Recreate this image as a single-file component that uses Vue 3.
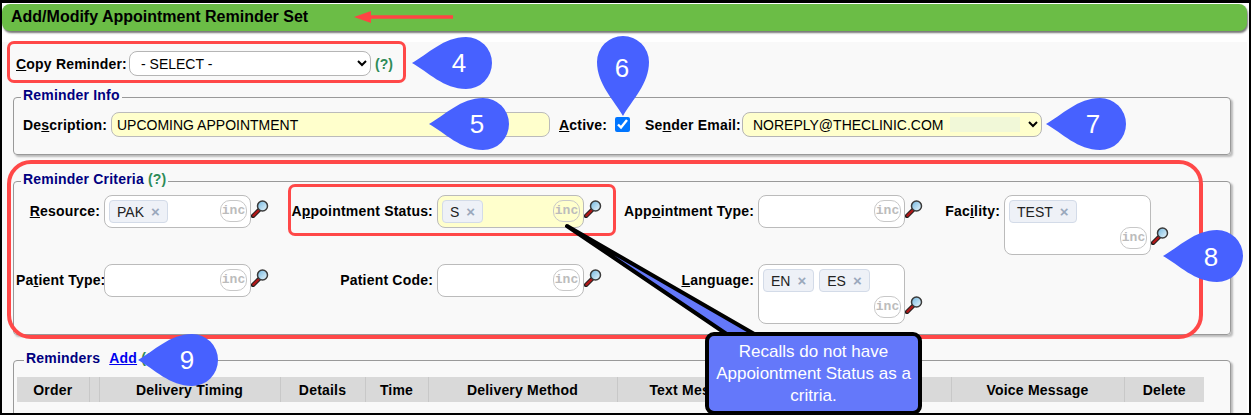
<script setup>
const fields = [
  { pre: '', u: 'R', post: 'esource:', chips: ['PAK'] },
  { pre: 'A', u: 'p', post: 'pointment Status:', chips: ['S'], yellow: true },
  { pre: 'App', u: 'o', post: 'intment Type:', chips: [] },
  { pre: 'Fac', u: 'i', post: 'lity:', chips: ['TEST'], tall: true },
  { pre: 'Pa', u: 't', post: 'ient Type:', chips: [] },
  { pre: 'Patient Code:', u: '', post: '', chips: [] },
  { pre: '', u: 'L', post: 'anguage:', chips: ['EN', 'ES'], tall: true },
]
const columns = [
  { name: 'Order', w: 72 }, { name: '', w: 10 }, { name: 'Delivery Timing', w: 181 },
  { name: 'Details', w: 85 }, { name: 'Time', w: 63 }, { name: 'Delivery Method', w: 189 },
  { name: 'Text Message', w: 158 }, { name: 'Email Message', w: 176 },
  { name: 'Voice Message', w: 173 }, { name: 'Delete', w: 80 },
]
const dropShape = 'M-54 0C-38 -9 -22 -26 0 -26A26 26 0 1 1 0 26C-22 26 -38 9 -54 0Z'
const pins = [
  { n: '4', x: 466, y: 63, tx: 459, ty: 72 },
  { n: '5', x: 483, y: 124, tx: 477, ty: 133 },
  { n: '6', x: 623, y: 62, tx: 622, ty: 77, down: true },
  { n: '7', x: 1100, y: 124, tx: 1093, ty: 133 },
  { n: '8', x: 1217, y: 256, tx: 1211, ty: 266 },
  { n: '9', x: 192, y: 360, tx: 187, ty: 369 },
]
</script>

<template>
  <div class="page">
    <div class="inner">
      <h1 class="title">Add/Modify Appointment Reminder Set</h1>
      <div class="content">
        <div class="copy-row">
          <label class="lbl"><u>C</u>opy Reminder:</label>
          <select class="sel copy-sel"><option>- SELECT -</option></select>
          <span class="help">(?)</span>
        </div>

        <fieldset class="group info">
          <legend>Reminder Info</legend>
          <div class="info-row">
            <label class="lbl">De<u>s</u>cription:</label>
            <input class="text-input" type="text" value="UPCOMING APPOINTMENT" />
            <label class="lbl active-lbl"><u>A</u>ctive:</label>
            <input class="check" type="checkbox" checked />
            <label class="lbl sender-lbl">Se<u>n</u>der Email:</label>
            <div class="sender-wrap">
              <select class="sel sender-sel"><option>NOREPLY@THECLINIC.COM</option></select>
              <span class="autofill"></span>
            </div>
          </div>
        </fieldset>

        <fieldset class="group criteria">
          <legend>Reminder Criteria <span class="help">(?)</span></legend>
          <div class="crit-grid">
            <template v-for="f in fields" :key="f.pre + f.post">
              <label class="lbl crit-lbl">{{ f.pre }}<u v-if="f.u">{{ f.u }}</u>{{ f.post }}</label>
              <div class="crit-field">
                <div class="box" :class="{ tall: f.tall, yellow: f.yellow }">
                  <div class="chips">
                    <span v-for="c in f.chips" :key="c" class="chip">{{ c }}<b class="x">×</b></span>
                  </div>
                  <span class="inc">inc</span>
                </div>
                <svg class="mag" width="18" height="18" viewBox="0 0 18 18">
                  <defs>
                    <linearGradient id="glass" x1="0" y1="0" x2="1" y2="1">
                      <stop offset="0" stop-color="#6fb6e0" />
                      <stop offset="1" stop-color="#eef8fc" />
                    </linearGradient>
                  </defs>
                  <path d="M8 10L2 16" stroke="#222" stroke-width="4.4" stroke-linecap="round" />
                  <path d="M8 10L2.4 15.6" stroke="#b01818" stroke-width="2.4" stroke-linecap="round" />
                  <circle cx="11.5" cy="6" r="5" fill="url(#glass)" stroke="#3a3a3a" stroke-width="1.5" />
                </svg>
              </div>
            </template>
          </div>
        </fieldset>

        <fieldset class="group reminders">
          <legend>Reminders <a class="add" href="#">Add</a> <span class="help">(?)</span></legend>
          <table class="rem-table">
            <colgroup>
              <col v-for="c in columns" :key="c.w + c.name" :style="{ width: c.w + 'px' }" />
            </colgroup>
            <thead>
              <tr>
                <th v-for="c in columns" :key="c.name + c.w">{{ c.name }}</th>
              </tr>
            </thead>
          </table>
        </fieldset>
      </div>
    </div>

    <div class="mark mark-copy"></div>
    <div class="mark mark-crit"></div>
    <div class="mark mark-status"></div>

    <svg class="overlay" width="1251" height="415" viewBox="0 0 1251 415">
      <path d="M354 17L371 11V15.3H453V18.7H371V23Z" fill="#ff4444" />
      <path d="M567 226L756 335H728Z" fill="#6478fa" stroke="#000" stroke-width="4" stroke-linejoin="round" />
      <g v-for="p in pins" :key="p.n">
        <path :d="dropShape" fill="#4761ff" :transform="`translate(${p.x} ${p.y})` + (p.down ? ' rotate(-90)' : '')" />
        <text class="pin-num" :x="p.tx" :y="p.ty" text-anchor="middle">{{ p.n }}</text>
      </g>
    </svg>

    <div class="callout">Recalls do not have Appoiontment Status as a critria.</div>
  </div>
</template>

<style scoped>
.page {
  position: relative;
  box-sizing: border-box;
  width: 1251px;
  height: 415px;
  padding: 3px 2px 2px;
  background: #000;
  overflow: hidden;
  font-family: "Liberation Sans", Arial, sans-serif;
  color: #000;
}
.inner {
  height: 100%;
  background: #fff;
  padding-top: 1px;
  box-sizing: border-box;
  overflow: hidden;
}
.title {
  box-sizing: border-box;
  height: 27px;
  width: 1245px;
  margin: 0;
  padding-left: 9px;
  font-size: 16px;
  line-height: 26px;
  font-weight: bold;
  background: #6bbd46;
  border-radius: 8px;
  box-shadow: 1px 2px 2px #777;
}
.content {
  margin-top: 11px;
  width: 1245px;
  height: 400px;
  padding: 9px 0 0 11px;
  box-sizing: border-box;
  background: #f9f9f9;
}
.lbl {
  font-size: 14px;
  font-weight: bold;
  letter-spacing: 0.2px;
  line-height: 16px;
  white-space: nowrap;
}
.help {
  font-size: 14px;
  font-weight: bold;
  color: #2e8b57;
}
.copy-row {
  display: flex;
  align-items: center;
  height: 25px;
  padding-left: 3px;
}
.copy-row .lbl {
  width: 113px;
}
.sel {
  box-sizing: border-box;
  height: 25px;
  border: 1px solid #b5b5b5;
  border-radius: 8px;
  font: 14px "Liberation Sans", Arial, sans-serif;
  color: #000;
}
.copy-sel {
  width: 242px;
  padding-left: 7px;
  background: #fff;
  margin-right: 4px;
}
.group {
  box-sizing: border-box;
  width: 1218px;
  margin: 0;
  padding: 0;
  border: 1px solid #999;
  border-radius: 4px;
  box-shadow: 2px 2px 2px #bbb;
}
.group legend {
  margin-left: 7px;
  padding: 0 2px 5px;
  font-size: 14px;
  line-height: 16px;
  font-weight: bold;
  color: #000080;
  letter-spacing: 0.2px;
}
.info {
  margin-top: 11px;
}
.info-row {
  display: flex;
  align-items: center;
  padding: 4px 0 17px 9px;
}
.info-row .lbl:first-child {
  width: 88px;
}
.text-input {
  box-sizing: border-box;
  width: 439px;
  height: 25px;
  padding: 0 5px;
  border: 1px solid #bbb;
  border-radius: 8px;
  background: #ffffcc;
  font: 14px "Liberation Sans", Arial, sans-serif;
  color: #000;
  outline: none;
}
.active-lbl {
  width: 56px;
  margin-left: 9px;
}
.check {
  width: 15px;
  height: 15px;
  margin: 0 15px 0 0;
}
.sender-lbl {
  width: 97px;
}
.sender-wrap {
  position: relative;
  width: 300px;
  height: 25px;
}
.sender-sel {
  width: 300px;
  padding-left: 6px;
  background: #ffffcc;
}
.autofill {
  position: absolute;
  left: 208px;
  top: 5px;
  width: 70px;
  height: 15px;
  background: #f1f8d8;
  pointer-events: none;
}
.criteria {
  margin-top: 16px;
}
.crit-grid {
  display: grid;
  grid-template-columns: 88px 169px 164px 169px 152px 168px 78px 169px;
  grid-template-rows: 60px 60px;
  row-gap: 9px;
  padding: 3px 0 10px 2px;
}
.crit-lbl {
  text-align: right;
  padding: 8px 4px 0 0;
}
.crit-field {
  display: flex;
  align-items: flex-start;
}
.box {
  box-sizing: border-box;
  display: flex;
  justify-content: space-between;
  width: 147px;
  height: 33px;
  padding: 4px 3px 0 4px;
  border: 1px solid #bbb;
  border-radius: 8px;
  background: #fff;
}
.box.tall {
  height: 60px;
}
.box.yellow {
  background: #ffffcc;
}
.chips {
  display: flex;
  gap: 5px;
  align-items: flex-start;
}
.chip {
  box-sizing: border-box;
  display: flex;
  align-items: center;
  height: 23px;
  padding: 0 7px;
  gap: 7px;
  border: 1px solid #d3dbe8;
  border-radius: 4px;
  background: #eef1f7;
  font-size: 14px;
  color: #222;
}
.x {
  font-size: 15px;
  line-height: 15px;
  color: #9aa8bc;
}
.inc {
  box-sizing: border-box;
  align-self: flex-end;
  width: 27px;
  height: 22px;
  margin-bottom: 5px;
  border: 1px solid #c8c8c8;
  border-radius: 10px;
  font: bold 13px/20px "Liberation Mono", monospace;
  text-align: center;
  color: #bcbcbc;
}
.mag {
  flex: none;
  align-self: flex-start;
  margin-top: 5px;
}
.box.tall + .mag {
  margin-top: 32px;
}
.reminders {
  margin-top: 15px;
  height: 90px;
  padding: 6px 0 0 3px;
}
.add {
  margin-left: 5px;
  color: #0000ee;
  text-decoration: underline;
}
.rem-table {
  table-layout: fixed;
  width: 1187px;
  border-collapse: collapse;
}
.rem-table th {
  height: 25px;
  padding: 0;
  background: #d9d9d9;
  border-right: 1px solid #c8c8c8;
  font-size: 14px;
  font-weight: bold;
  letter-spacing: 0.2px;
  white-space: nowrap;
}
.rem-table th:last-child {
  border-right: 0;
}
.mark {
  position: absolute;
  box-sizing: border-box;
  border: 3px solid #ff4848;
  pointer-events: none;
}
.mark-copy {
  left: 7px;
  top: 41px;
  width: 399px;
  height: 42px;
  border-radius: 7px;
}
.mark-crit {
  left: 7px;
  top: 160px;
  width: 1196px;
  height: 179px;
  border-width: 4px;
  border-radius: 24px;
}
.mark-status {
  left: 288px;
  top: 184px;
  width: 328px;
  height: 52px;
  border-radius: 7px;
}
.overlay {
  position: absolute;
  left: 0;
  top: 0;
  pointer-events: none;
}
.pin-num {
  font-family: "Liberation Sans", Arial, sans-serif;
  font-size: 26px;
  fill: #fff;
}
.callout {
  position: absolute;
  box-sizing: border-box;
  left: 705px;
  top: 332px;
  width: 217px;
  height: 83px;
  padding: 0 6px;
  display: flex;
  align-items: center;
  justify-content: center;
  text-align: center;
  background: #6478fa;
  border: 4px solid #000;
  border-radius: 9px;
  font-size: 17px;
  line-height: 22px;
  color: #fff;
}
</style>
